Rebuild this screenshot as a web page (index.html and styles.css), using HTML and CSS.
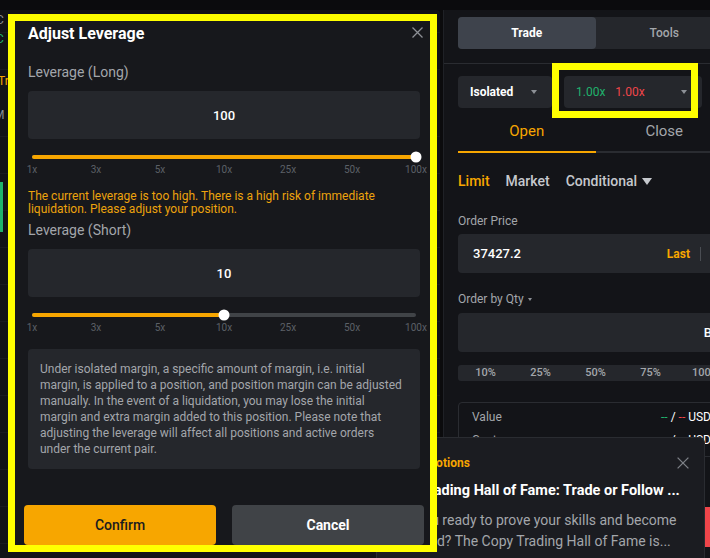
FILE: index.html
```html
<!DOCTYPE html>
<html lang="en">
<head>
<meta charset="utf-8">
<title>Adjust Leverage</title>
<link rel="stylesheet" href="styles.css">
</head>
<body>
<div class="app">
  <div class="workspace">
    <section class="chart">
      <div class="chart-edge">
        <span class="edge-c">C</span>
        <span class="edge-g">C</span>
        <span class="edge-o">Tr</span>
        <span class="edge-m">M</span>
      </div>
      <div class="candle"></div>
    </section>

    <aside class="panel">
      <div class="panel-head">
        <div class="seg">
          <div class="seg-item active">Trade</div>
          <div class="seg-item">Tools</div>
        </div>
      </div>
      <div class="panel-body">
        <div class="selects">
          <div class="select mode"><span>Isolated</span><i class="caret"></i></div>
          <div class="select lev"><span class="lev-vals"><span class="up">1.00x</span><span class="down">1.00x</span></span><i class="caret"></i></div>
        </div>

        <div class="side-tabs">
          <div class="side active">Open</div>
          <div class="side">Close</div>
        </div>

        <div class="order-types">
          <span class="active">Limit</span>
          <span>Market</span>
          <span class="cond">Conditional <i class="tri"></i></span>
        </div>

        <div class="field-label">Order Price</div>
        <div class="field price-field">
          <span class="val">37427.2</span>
          <span class="last">Last</span>
          <span class="sep"></span>
          <span class="unit">USD</span>
        </div>

        <div class="field-label qty">Order by Qty <i class="mini-caret"></i></div>
        <div class="field qty-field"><span class="unit">BTC</span></div>

        <div class="percent">
          <span>10%</span><span>25%</span><span>50%</span><span>75%</span><span>100%</span>
        </div>

        <div class="summary">
          <div class="row"><span>Value</span><span class="amt"><b class="up">--</b> / <b class="down">--</b> USD</span></div>
          <div class="row"><span>Cost</span><span class="amt"><b class="up">--</b> / <b class="down">--</b> USD</span></div>
        </div>

        <div class="trade-buttons">
          <div class="btn buy">Buy / Long</div>
          <div class="btn sell">Sell / Short</div>
        </div>
      </div>
    </aside>
  </div>

  <div class="promo">
    <div class="promo-head">
      <span class="promo-tag">
        <svg class="promo-icon" width="12" height="12" viewBox="0 0 12 12"><path d="M1 4.5h2.5L8 1.5v9L3.5 7.5H1z" fill="#f7a600"/></svg>
        Promotions
      </span>
      <svg class="promo-close" width="12" height="12" viewBox="0 0 12 12"><path d="M0.6 0.6l10.8 10.8M11.4 0.6L0.6 11.4" stroke="#7d8087" stroke-width="1.3" fill="none"/></svg>
    </div>
    <div class="promo-title">Copy Trading Hall of Fame: Trade or Follow ...</div>
    <p class="promo-text">Are you ready to prove your skills and become<br>a legend? The Copy Trading Hall of Fame is...</p>
  </div>

  <div class="dialog-frame">
    <div class="dialog">
      <div class="dialog-head">
        <h2>Adjust Leverage</h2>
        <svg class="dialog-close" width="11" height="11" viewBox="0 0 11 11"><path d="M0.5 0.5l10 10M10.5 0.5l-10 10" stroke="#8d9096" stroke-width="1.3" fill="none"/></svg>
      </div>

      <div class="lev-label">Leverage (Long)</div>
      <div class="lev-input">100</div>
      <div class="slider">
        <div class="track">
          <div class="fill" style="width:100%"></div>
          <div class="thumb" style="left:100%"></div>
        </div>
      </div>
      <div class="ticks"><span>1x</span><span>3x</span><span>5x</span><span>10x</span><span>25x</span><span>50x</span><span>100x</span></div>

      <p class="warn">The current leverage is too high. There is a high risk of immediate liquidation. Please adjust your position.</p>

      <div class="lev-label short">Leverage (Short)</div>
      <div class="lev-input">10</div>
      <div class="slider">
        <div class="track">
          <div class="fill" style="width:50%"></div>
          <div class="thumb" style="left:50%"></div>
        </div>
      </div>
      <div class="ticks"><span>1x</span><span>3x</span><span>5x</span><span>10x</span><span>25x</span><span>50x</span><span>100x</span></div>

      <p class="info">Under isolated margin, a specific amount of margin, i.e. initial<br>margin, is applied to a position, and position margin can be adjusted<br>manually. In the event of a liquidation, you may lose the initial<br>margin and extra margin added to this position. Please note that<br>adjusting the leverage will affect all positions and active orders<br>under the current pair.</p>

      <div class="dialog-foot">
        <div class="btn confirm">Confirm</div>
        <div class="btn cancel">Cancel</div>
      </div>
    </div>
  </div>

  <div class="highlight"></div>
</div>
</body>
</html>
```

FILE: styles.css
```css
* {
  box-sizing: border-box;
  margin: 0;
  padding: 0;
}

html,
body {
  width: 710px;
  height: 558px;
}

body {
  background: #0b0b0d;
  font-family: Roboto, "Liberation Sans", sans-serif;
  color: #ffffff;
  overflow: hidden;
}

.app {
  position: relative;
  width: 710px;
  height: 558px;
  overflow: hidden;
}

/* ---------- page behind the dialog ---------- */

.workspace {
  display: flex;
  gap: 3px;
  padding-top: 10px;
  height: 558px;
}

.chart {
  position: relative;
  width: 440px;
  flex: none;
  background-color: #121317;
  background-image: repeating-linear-gradient(to bottom, transparent 0, transparent 36px, #1a1b20 36px, #1a1b20 37px);
  background-position: 0 90px;
  border-radius: 0 4px 0 0;
  overflow: hidden;
}

.chart-edge {
  display: flex;
  flex-direction: column;
  align-items: flex-start;
  font-size: 12px;
  line-height: 14px;
}

.edge-c { margin: 3px 0 0 -4px; color: #8a8d92; }
.edge-g { margin: 5px 0 0 -4px; color: #20b26c; }
.edge-o { margin: 28px 0 0 -2px; color: #f7a600; }
.edge-m { margin: 20px 0 0 -6px; color: #8a8d92; }

.candle {
  position: absolute;
  left: -2px;
  top: 172px;
  width: 5px;
  height: 50px;
  background: #20b26c;
}

.panel {
  width: 304px;
  flex: none;
  background: #131418;
  border-left: 1px solid #1f2126;
}

.panel-head {
  padding: 7px 14px 14px;
  border-bottom: 1px solid #2a2c31;
}

.seg {
  display: flex;
  height: 32px;
  background: #25272c;
  border-radius: 4px;
}

.seg-item {
  flex: 1;
  display: flex;
  align-items: center;
  justify-content: center;
  font-size: 12px;
  font-weight: 500;
  color: #a3a6ab;
  border-radius: 4px;
}

.seg-item.active {
  background: #3e434c;
  color: #ffffff;
  font-weight: 700;
}

.panel-body {
  padding: 12px 14px 0;
}

.selects {
  display: flex;
  gap: 12px;
}

.select {
  height: 32px;
  background: #25272c;
  border-radius: 4px;
  display: flex;
  align-items: center;
  justify-content: space-between;
  padding: 0 15px 0 12px;
  font-size: 12px;
}

.select.mode {
  width: 94px;
  font-weight: 700;
}

.select.lev {
  width: 138px;
}

.lev-vals {
  display: flex;
  gap: 10px;
}

.caret {
  width: 0;
  height: 0;
  border-left: 3px solid transparent;
  border-right: 3px solid transparent;
  border-top: 4px solid #8c9096;
}

.up { color: #20b26c; }
.down { color: #ef454a; }

.side-tabs {
  display: flex;
}

.side {
  flex: 1;
  text-align: center;
  font-size: 15px;
  line-height: 20px;
  padding: 13px 0 10px;
  color: #a3a6ab;
  border-bottom: 2px solid #2a2c31;
}

.side.active {
  color: #f7a600;
  border-bottom-color: #f7a600;
}

.order-types {
  display: flex;
  gap: 16px;
  margin-top: 18px;
  font-size: 14px;
  font-weight: 500;
  line-height: 20px;
  color: #c5c8cd;
}

.order-types .active {
  color: #f7a600;
}

.cond {
  display: flex;
  align-items: center;
  gap: 5px;
}

.tri {
  width: 0;
  height: 0;
  border-left: 5px solid transparent;
  border-right: 5px solid transparent;
  border-top: 7px solid #c5c8cd;
}

.field-label {
  margin-top: 22px;
  font-size: 12px;
  line-height: 16px;
  color: #a3a6ab;
  display: flex;
  align-items: center;
  gap: 4px;
}

.field-label.qty {
  margin-top: 18px;
}

.mini-caret {
  width: 0;
  height: 0;
  border-left: 2.5px solid transparent;
  border-right: 2.5px solid transparent;
  border-top: 3px solid #8c9096;
}

.field {
  margin-top: 5px;
  height: 39px;
  background: #25272c;
  border-radius: 4px;
  display: flex;
  align-items: center;
  padding: 0 12px 0 15px;
  font-size: 13px;
  font-weight: 500;
}

.price-field {
  padding-right: 0;
  overflow: hidden;
}

.field .val {
  margin-right: auto;
}

.field .last {
  color: #f7a600;
  font-size: 12px;
  font-weight: 700;
}

.field .sep {
  width: 1px;
  height: 14px;
  background: #4a4d53;
  margin: 0 10px;
}

.price-field .unit {
  flex: none;
  width: 22px;
  overflow: hidden;
}

.qty-field {
  margin-top: 6px;
  justify-content: flex-end;
  padding-right: 5px;
}

.percent {
  margin-top: 13px;
  height: 16px;
  background: #25272c;
  border-radius: 3px;
  display: grid;
  grid-template-columns: repeat(5, 1fr);
  font-size: 11px;
  font-weight: 500;
  line-height: 16px;
  text-align: center;
  color: #a3a6ab;
}

.summary {
  margin-top: 21px;
  border: 1px solid #2a2c31;
  border-radius: 4px;
  padding: 6px 21px 8px 13px;
  display: flex;
  flex-direction: column;
  gap: 7px;
}

.summary .row {
  display: flex;
  justify-content: space-between;
  font-size: 12px;
  line-height: 16px;
  color: #a3a6ab;
}

.summary .amt {
  color: #ffffff;
}

.summary b {
  font-weight: 400;
}

.trade-buttons {
  margin-top: 50px;
  display: flex;
  gap: 8px;
}

.trade-buttons .btn {
  flex: 1;
  height: 40px;
  border-radius: 4px;
  display: flex;
  align-items: center;
  justify-content: center;
  font-size: 14px;
  font-weight: 700;
}

.buy { background: #20b26c; }
.sell { background: #ef454a; }

/* ---------- promotions toast ---------- */

.promo {
  position: absolute;
  left: 376px;
  top: 437px;
  width: 329px;
  height: 130px;
  background: #1b1c21;
  border: 1px solid #2a2c31;
  border-radius: 6px;
  padding: 17px 15px 0;
}

.promo-head {
  display: flex;
  align-items: center;
  justify-content: space-between;
  line-height: 16px;
}

.promo-tag {
  display: flex;
  align-items: center;
  gap: 6px;
  font-size: 12px;
  font-weight: 700;
  color: #f7a600;
}

.promo-icon {
  margin-left: -3px;
}

.promo-title {
  margin-left: -8px;
  margin-top: 10px;
  font-size: 14.5px;
  font-weight: 700;
  line-height: 20px;
  white-space: nowrap;
}

.promo-text {
  margin-top: 9px;
  font-size: 14px;
  line-height: 21px;
  color: #a3a6ab;
  white-space: nowrap;
}

/* ---------- leverage dialog ---------- */

.dialog-frame {
  position: absolute;
  left: 8px;
  top: 14px;
  width: 429px;
  height: 538px;
  border: 7px solid #ffff00;
  overflow: hidden;
}

.dialog {
  margin-left: -3px;
  width: 424px;
  height: 100%;
  background: #17181c;
  padding: 0 16px;
}

.dialog-head {
  display: flex;
  justify-content: space-between;
  align-items: flex-start;
  height: 26px;
}

.dialog-head h2 {
  font-size: 16px;
  font-weight: 700;
  line-height: 26px;
}

.dialog-close {
  margin: 6px -3px 0 0;
}

.lev-label {
  margin-top: 15px;
  font-size: 14px;
  line-height: 20px;
  color: #a3a6ab;
}

.lev-label.short {
  margin-top: 4px;
}

.lev-input {
  margin-top: 9px;
  height: 48px;
  background: #25272c;
  border-radius: 4px;
  display: flex;
  align-items: center;
  justify-content: center;
  font-size: 13px;
  font-weight: 500;
}

.slider {
  margin-top: 12px;
  height: 12px;
  padding: 4px 4px 0;
}

.track {
  position: relative;
  height: 4px;
  border-radius: 2px;
  background: #404347;
}

.fill {
  height: 100%;
  border-radius: 2px;
  background: #f7a600;
}

.thumb {
  position: absolute;
  top: 50%;
  width: 11px;
  height: 11px;
  border-radius: 50%;
  background: #ffffff;
  transform: translate(-50%, -50%);
}

.ticks {
  margin: 1px -28px 0;
  display: grid;
  grid-template-columns: repeat(7, 64px);
  font-size: 10px;
  line-height: 12px;
  text-align: center;
  color: #5c6067;
}

.warn {
  margin-top: 14px;
  font-size: 12px;
  font-weight: 400;
  line-height: 13px;
  color: #eda30d;
}

.info {
  margin-top: 15px;
  background: #25272c;
  border-radius: 4px;
  padding: 12px;
  font-size: 12px;
  line-height: 16px;
  color: #a3a6ab;
  white-space: nowrap;
}

.dialog-foot {
  margin: 36px -4px 0;
  display: flex;
  gap: 16px;
}

.dialog-foot .btn {
  flex: 1;
  height: 40px;
  border-radius: 4px;
  display: flex;
  align-items: center;
  justify-content: center;
  font-size: 14px;
}

.confirm {
  background: #f7a600;
  color: #1a1b1f;
  font-weight: 500;
}

.cancel {
  background: #404347;
  color: #ffffff;
  font-weight: 700;
}

/* marker around the leverage selector */
.highlight {
  position: absolute;
  left: 552px;
  top: 63px;
  width: 146px;
  height: 55px;
  border: 7px solid #ffff00;
}
```
